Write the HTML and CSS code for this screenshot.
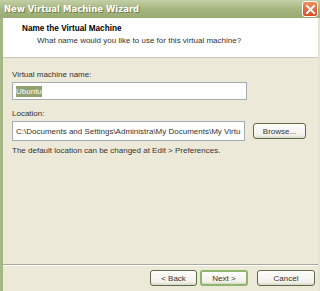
FILE: index.html
```html
<!DOCTYPE html>
<html lang="en">

<head>
    <meta charset="utf-8">
    <title>New Virtual Machine Wizard</title>
    <link rel="stylesheet" href="styles.css">
</head>

<body>
    <div class="window">
        <div class="titlebar">
            <span class="title">New Virtual Machine Wizard</span>
            <span class="close">
                <svg width="11" height="11" viewBox="0 0 11 11">
                    <path d="M2 2 L9 9 M9 2 L2 9" stroke="#fff" stroke-width="2" stroke-linecap="square" />
                </svg>
            </span>
        </div>

        <div class="header">
            <h1>Name the Virtual Machine</h1>
            <p>What name would you like to use for this virtual machine?</p>
        </div>

        <div class="content">
            <label class="label">Virtual machine name:</label>
            <div class="field name-field"><span class="selected">Ubuntu</span></div>

            <label class="label location-label">Location:</label>
            <div class="row">
                <div class="field location-field">C:\Documents and Settings\Administra\My Documents\My Virtu</div>
                <button class="btn browse">Browse...</button>
            </div>
            <p class="hint">The default location can be changed at Edit &gt; Preferences.</p>
        </div>

        <div class="footer">
            <button class="btn">&lt; Back</button>
            <button class="btn default">Next &gt;</button>
            <button class="btn cancel">Cancel</button>
        </div>
    </div>
</body>

</html>
```

FILE: styles.css
```css
* {
    box-sizing: border-box;
}

body {
    margin: 0;
    width: 320px;
    height: 291px;
    overflow: hidden;
    font-family: 'Liberation Sans', Arial, sans-serif;
    font-size: 8px;
    color: #000;
}

.window {
    height: 291px;
    display: flex;
    flex-direction: column;
    background: #ece9d8;
    border-left: 3px solid #a5b784;
    border-right: 2px solid #e4e4d4;
}

.titlebar {
    height: 18px;
    margin-left: -3px;
    margin-right: -2px;
    display: flex;
    align-items: center;
    justify-content: space-between;
    padding: 0 2px 0 4px;
    background: linear-gradient(#c3cfa6, #a6b681 50%, #98aa72);
}

.title {
    color: #fff;
    font-family: 'DejaVu Sans', sans-serif;
    font-weight: bold;
    font-size: 8.5px;
    text-shadow: 1px 1px 0 #6f7d4c;
}

.close {
    width: 16px;
    height: 16px;
    display: flex;
    align-items: center;
    justify-content: center;
    border: 1px solid #fff;
    border-radius: 3px;
    background: linear-gradient(#f08a5c, #d94d23);
}

.header {
    height: 40px;
    background: #fff;
    border-bottom: 1px solid #c9c6b6;
    padding: 6px 0 0 19px;
}

h1 {
    margin: 0;
    font-size: 8.2px;
    font-weight: bold;
    font-family: 'Liberation Sans', Arial, sans-serif;
}

.header p {
    margin: 3px 0 0 15px;
    color: #333;
}

.content {
    flex: 1;
    padding: 12px 9px 0 9px;
    display: flex;
    flex-direction: column;
}

.label {
    color: #333;
    margin-bottom: 3px;
}

.location-label {
    margin-top: 9px;
}

.field {
    background: #fff;
    border: 1px solid #a5acb5;
    padding: 0 3px;
    white-space: nowrap;
    overflow: hidden;
    color: #333;
    display: flex;
    align-items: center;
}

.name-field {
    width: 235px;
    height: 18px;
}

.selected {
    background: #93a070;
    color: #fff;
    padding: 1px 0;
}

.row {
    display: flex;
    align-items: center;
    gap: 8px;
}

.location-field {
    width: 233px;
    height: 20px;
}

.btn {
    font-family: 'Liberation Sans', Arial, sans-serif;
    font-size: 8px;
    color: #333;
    height: 16px;
    padding: 0;
    border: 1px solid #5f6a4a;
    border-radius: 3px;
    background: linear-gradient(#fefefe, #f2f1ea 80%, #d8d6c8);
}

.browse {
    width: 53px;
    height: 16px;
}

.hint {
    margin: 5px 0 0 0;
    color: #333;
}

.footer {
    height: 27px;
    border-top: 1px solid #aca899;
    box-shadow: inset 0 1px 0 #fff;
    display: flex;
    align-items: center;
    padding: 0 2px 0 147px;
    gap: 3px;
}

.footer .btn {
    width: 47px;
}

.footer .default {
    width: 48px;
    border: 2px solid #8fb56f;
}

.footer .cancel {
    width: 58px;
    margin-left: 6px;
}
```
